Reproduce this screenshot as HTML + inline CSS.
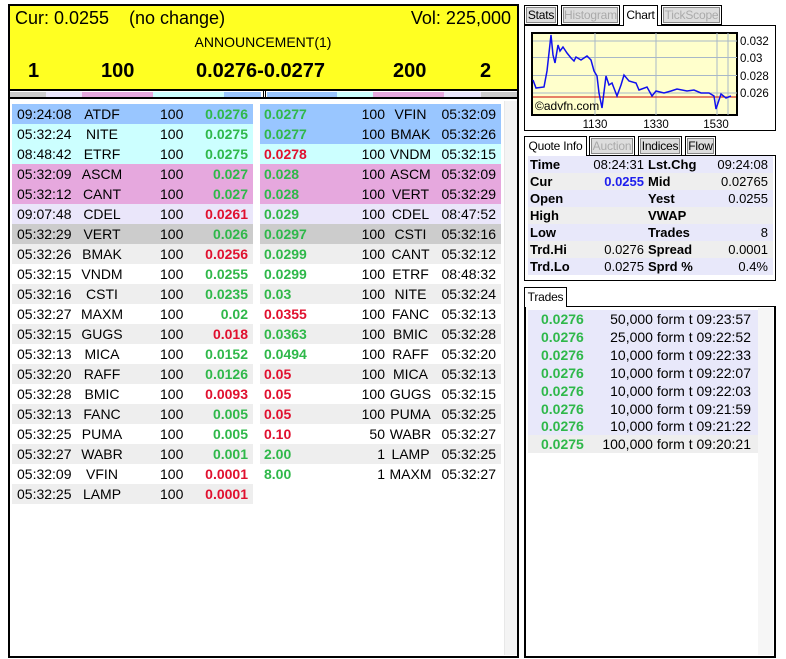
<!DOCTYPE html>
<html><head><meta charset="utf-8"><style>
*{margin:0;padding:0;box-sizing:border-box}
body{width:786px;height:659px;background:#fff;font-family:"Liberation Sans",Arial,sans-serif;position:relative;overflow:hidden;color:#000}
.a{position:absolute;white-space:nowrap}
.g{color:#2fb84a;font-weight:bold}
.r{color:#e0102f;font-weight:bold}
.row{position:absolute;height:20px;font-size:14px;line-height:20px}
.row span{position:absolute;top:0}
.tab{position:absolute;height:20px;font-size:12px;line-height:19px;text-align:center;border:1px solid #000;background:#ddd;box-shadow:inset 0 0 0 1px #fff,inset 0 0 0 2px #888;overflow:hidden;letter-spacing:-0.2px}
.tab.on{background:#fff;box-shadow:none;border-bottom:none;z-index:2}
.tab.dis{color:#aaa}
.q{position:absolute;left:528px;width:245px;height:17px;font-size:13px;line-height:17px}
.q span{position:absolute;top:0}
.q b{position:absolute;top:0}
.t{position:absolute;left:528px;width:230px;height:18px;font-size:14px;line-height:18px;background:#e8e8fa}
.t span{position:absolute;top:0}
</style></head><body>
<div class="a" style="left:8px;top:4px;width:511px;height:654px;border:2px solid #000"></div>
<div class="a" style="left:10px;top:6px;width:507px;height:84px;background:#ffff22"></div>
<div class="a" style="left:15px;top:8px;font-size:18px">Cur: 0.0255</div>
<div class="a" style="left:129px;top:8px;font-size:18px">(no change)</div>
<div class="a" style="right:275px;top:8px;font-size:18px">Vol: 225,000</div>
<div class="a" style="left:0;width:526px;text-align:center;top:34px;font-size:14px">ANNOUNCEMENT(1)</div>
<div class="a" style="left:28px;top:60px;font-size:20px;font-weight:bold">1</div>
<div class="a" style="left:101px;top:60px;font-size:20px;font-weight:bold">100</div>
<div class="a" style="left:196px;top:60px;font-size:20px;font-weight:bold">0.0276-0.0277</div>
<div class="a" style="left:393px;top:60px;font-size:20px;font-weight:bold">200</div>
<div class="a" style="left:480px;top:60px;font-size:20px;font-weight:bold">2</div>
<div class="a" style="left:8px;top:89px;width:511px;height:2px;background:#000"></div>
<div class="a" style="left:8px;top:89px;width:256px;height:10px;border:1px solid #000;border-top:2px solid #000"></div>
<div class="a" style="left:265px;top:89px;width:254px;height:10px;border:1px solid #000;border-top:2px solid #000"></div>
<div class="a" style="left:10px;top:92px;width:36px;height:5px;background:#ccc"></div>
<div class="a" style="left:46px;top:92px;width:36px;height:5px;background:#eae6fa"></div>
<div class="a" style="left:82px;top:92px;width:71px;height:5px;background:#e6a8de"></div>
<div class="a" style="left:153px;top:92px;width:71px;height:5px;background:#ccffff"></div>
<div class="a" style="left:224px;top:92px;width:37px;height:5px;background:#99c6ff"></div>
<div class="a" style="left:267px;top:92px;width:70px;height:5px;background:#99c6ff"></div>
<div class="a" style="left:337px;top:92px;width:36px;height:5px;background:#ccffff"></div>
<div class="a" style="left:373px;top:92px;width:71px;height:5px;background:#e6a8de"></div>
<div class="a" style="left:444px;top:92px;width:37px;height:5px;background:#eae6fa"></div>
<div class="a" style="left:481px;top:92px;width:36px;height:5px;background:#ccc"></div>
<div class="a" style="left:8px;top:97px;width:511px;height:2px;background:#000"></div>
<div class="a" style="left:504px;top:101px;width:13px;height:554px;background:#f4f4f4;border-left:1px solid #e8e8e8"></div>
<div id="L"></div>
<div class="tab" style="left:524px;top:5px;width:34px">Stats</div>
<div class="tab dis" style="left:561px;top:5px;width:59px">Histogram</div>
<div class="tab on" style="left:623px;top:5px;width:35px;height:21px">Chart</div>
<div class="tab dis" style="left:661px;top:5px;width:61px">TickScope</div>
<div class="a" style="left:524px;top:25px;width:252px;height:106px;border:1px solid #000"></div>
<svg class="a" style="left:524px;top:25px" width="252" height="106" viewBox="524 25 252 106">
<rect x="532" y="33" width="205" height="82" fill="#ffffcc" stroke="#000" stroke-width="2"/>
<g stroke="#a8b8c8" stroke-width="1">
<line x1="533" y1="41" x2="737" y2="41"/><line x1="533" y1="57.5" x2="737" y2="57.5"/><line x1="533" y1="75.5" x2="737" y2="75.5"/><line x1="533" y1="93" x2="737" y2="93"/>
<line x1="595" y1="33" x2="595" y2="115"/><line x1="656" y1="33" x2="656" y2="115"/><line x1="717" y1="33" x2="717" y2="115"/><line x1="728" y1="33" x2="728" y2="115"/>
</g>
<line x1="533" y1="97" x2="736" y2="97" stroke="#cc0000" stroke-width="1"/>
<polyline fill="none" stroke="#1010ee" stroke-width="1.5" points="533,80 536,88 544,87 547,71 551,35 553,55 555,63 558,45 560,51 563,47 567,53 571,58 574,61 576,57 581,60 587,56 591,60 594,71 597,76 599,93 602,108 606,76 609,85 612,83 617,96 621,85 624,75 629,81 636,83 639,90 647,87 652,96 656,91 664,93 671,91 677,89 687,91 694,90 701,93 709,93 714,96 716,109 721,94 726,98 731,96"/>
<text x="535" y="110" font-size="12" font-family="Liberation Sans,sans-serif" fill="#000">©advfn.com</text>
<g font-size="11.5" font-family="Liberation Sans,sans-serif" fill="#000">
<text x="740" y="45">0.032</text><text x="740" y="62">0.03</text><text x="740" y="80">0.028</text><text x="740" y="97">0.026</text>
<text x="595" y="128" text-anchor="middle">1130</text><text x="656" y="128" text-anchor="middle">1330</text><text x="716" y="128" text-anchor="middle">1530</text>
</g>
</svg>
<div class="tab on" style="left:524px;top:136px;width:63px;height:20px">Quote Info</div>
<div class="tab dis" style="left:589px;top:136px;width:46px">Auction</div>
<div class="tab" style="left:638px;top:136px;width:44px">Indices</div>
<div class="tab" style="left:685px;top:136px;width:31px">Flow</div>
<div class="a" style="left:524px;top:155px;width:252px;height:126px;border:1px solid #000"></div>
<div id="Q"></div>
<div class="tab on" style="left:524px;top:287px;width:43px;height:20px">Trades</div>
<div class="a" style="left:524px;top:306px;width:252px;height:352px;border:2px solid #000;border-top:1px solid #000"></div>
<div class="a" style="left:758px;top:308px;width:15px;height:347px;background:#f6f6f6"></div>
<div id="T"></div>
<script>
var Lc=['#99c6ff','#ccffff','#ccffff','#e6a8de','#e6a8de','#eae6fa','#ccc'];
function bg(i){return i<7?Lc[i]:(i%2?'#eee':'#fff')}
var Rc=['#99c6ff','#99c6ff','#ccffff','#e6a8de','#e6a8de','#eae6fa','#ccc'];
function bgr(i){return i<7?Rc[i]:(i%2?'#eee':'#fff')}
var L=[["09:24:08","ATDF","0.0276","g"],["05:32:24","NITE","0.0275","g"],["08:48:42","ETRF","0.0275","g"],["05:32:09","ASCM","0.027","g"],["05:32:12","CANT","0.027","g"],["09:07:48","CDEL","0.0261","r"],["05:32:29","VERT","0.026","g"],["05:32:26","BMAK","0.0256","r"],["05:32:15","VNDM","0.0255","g"],["05:32:16","CSTI","0.0235","g"],["05:32:27","MAXM","0.02","g"],["05:32:15","GUGS","0.018","r"],["05:32:13","MICA","0.0152","g"],["05:32:20","RAFF","0.0126","g"],["05:32:28","BMIC","0.0093","r"],["05:32:13","FANC","0.005","g"],["05:32:25","PUMA","0.005","g"],["05:32:27","WABR","0.001","g"],["05:32:09","VFIN","0.0001","r"],["05:32:25","LAMP","0.0001","r"]];
var R=[["0.0277","g","100","VFIN","05:32:09"],["0.0277","g","100","BMAK","05:32:26"],["0.0278","r","100","VNDM","05:32:15"],["0.028","g","100","ASCM","05:32:09"],["0.028","g","100","VERT","05:32:29"],["0.029","g","100","CDEL","08:47:52"],["0.0297","g","100","CSTI","05:32:16"],["0.0299","g","100","CANT","05:32:12"],["0.0299","g","100","ETRF","08:48:32"],["0.03","g","100","NITE","05:32:24"],["0.0355","r","100","FANC","05:32:13"],["0.0363","g","100","BMIC","05:32:28"],["0.0494","g","100","RAFF","05:32:20"],["0.05","r","100","MICA","05:32:13"],["0.05","r","100","GUGS","05:32:15"],["0.05","r","100","PUMA","05:32:25"],["0.10","r","50","WABR","05:32:27"],["2.00","g","1","LAMP","05:32:25"],["8.00","g","1","MAXM","05:32:27"]];
var h='';
L.forEach(function(r,i){var y=104+i*20;h+='<div class="row" style="left:12px;top:'+y+'px;width:241px;background:'+bg(i)+'"><span style="left:5px">'+r[0]+'</span><span style="left:60px;width:60px;text-align:center">'+r[1]+'</span><span style="left:148px">100</span><span class="'+r[3]+'" style="right:5px">'+r[2]+'</span></div>';});
R.forEach(function(r,i){var y=104+i*20;h+='<div class="row" style="left:260px;top:'+y+'px;width:241px;background:'+bgr(i)+'"><span class="'+r[1]+'" style="left:4px">'+r[0]+'</span><span style="right:116px">'+r[2]+'</span><span style="left:129px;width:43px;text-align:center">'+r[3]+'</span><span style="right:5px">'+r[4]+'</span></div>';});
document.getElementById('L').innerHTML=h;
var Q=[["Time","08:24:31","Lst.Chg","09:24:08"],["Cur","0.0255","Mid","0.02765"],["Open","","Yest","0.0255"],["High","","VWAP",""],["Low","","Trades","8"],["Trd.Hi","0.0276","Spread","0.0001"],["Trd.Lo","0.0275","Sprd %","0.4%"]];
h='';Q.forEach(function(r,i){h+='<div class="q" style="top:'+(156+i*17)+'px;background:'+(i%2?'#eee':'#e8e8fa')+'"><b style="left:2px">'+r[0]+'</b><span style="right:129px;'+(i==1?'color:#2020ee;font-weight:bold':'')+'">'+r[1]+'</span><b style="left:120px">'+r[2]+'</b><span style="right:5px">'+r[3]+'</span></div>';});
document.getElementById('Q').innerHTML=h;
var T=[["0.0276","50,000 form t 09:23:57"],["0.0276","25,000 form t 09:22:52"],["0.0276","10,000 form t 09:22:33"],["0.0276","10,000 form t 09:22:07"],["0.0276","10,000 form t 09:22:03"],["0.0276","10,000 form t 09:21:59"],["0.0276","10,000 form t 09:21:22"],["0.0275","100,000 form t 09:20:21"]];
h='';T.forEach(function(r,i){h+='<div class="t" style="top:'+(310+i*17.9)+'px;'+(i==7?'background:#eee':'')+'"><span class="g" style="left:13px">'+r[0]+'</span><span style="right:7px">'+r[1]+'</span></div>';});
document.getElementById('T').innerHTML=h;
</script>
</body></html>
